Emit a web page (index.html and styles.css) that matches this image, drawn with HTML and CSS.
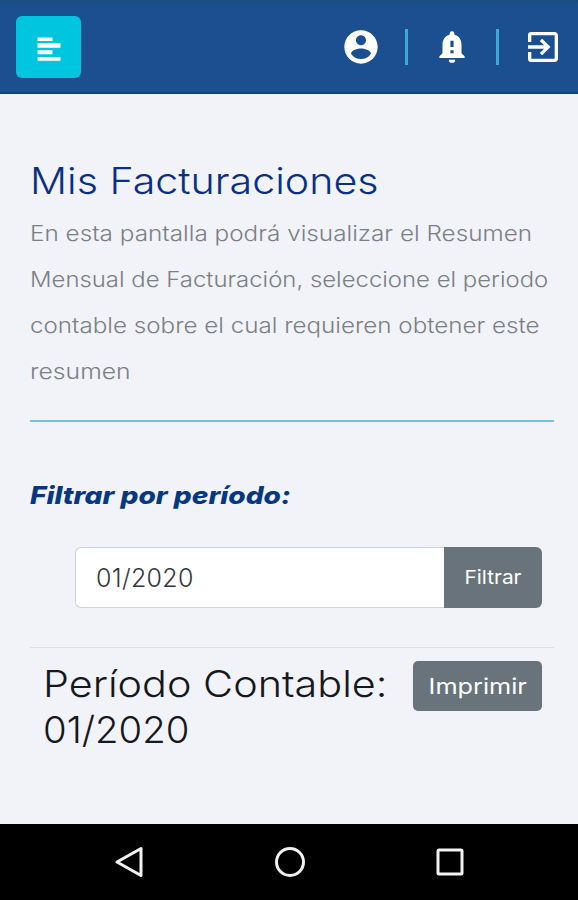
FILE: index.html
```html
<!DOCTYPE html>
<html lang="es">
<head>
<meta charset="utf-8">
<title>Mis Facturaciones</title>
<link rel="stylesheet" href="styles.css">
</head>
<body>
<header class="topbar">
  <button class="menu" aria-label="Menú">
    <svg width="24" height="24" viewBox="0 0 24 24"><path d="M0.500 0.500h15v3.500h-15zM0.500 6.200h23v4.500h-23zM0.500 13.200h15v4h-15zM0.500 20h23v3.700h-23z"/></svg>
  </button>
  <nav class="actions">
    <svg class="user" viewBox="0 0 24 24"><path d="M12 2C6.480 2 2 6.480 2 12s4.480 10 10 10 10-4.480 10-10S17.520 2 12 2zm0 3c1.660 0 3 1.340 3 3s-1.340 3-3 3-3-1.340-3-3 1.340-3 3-3zm0 14.200c-2.500 0-4.710-1.280-6-3.220.030-1.990 4-3.080 6-3.080 1.990 0 5.970 1.090 6 3.080-1.290 1.940-3.500 3.220-6 3.220z"/></svg>
    <span class="divider"></span>
    <svg class="bell" viewBox="0 0 24 24"><path fill-rule="evenodd" d="M10 20h4a2 2 0 0 1-4 0zM12 2a1.500 1.500 0 0 1 1.500 1.500v.700C16.360 4.860 18 7.420 18 10.500V16l2 2v1H4v-1l2-2v-5.500c0-3.080 1.640-5.640 4.500-6.300v-.700A1.500 1.500 0 0 1 12 2zm-1 6v4h2V8zm0 6v2h2v-2z"/></svg>
    <span class="divider"></span>
    <svg class="exit" viewBox="0 0 24 24"><path d="M10.090 15.590L11.500 17l5-5-5-5-1.410 1.410L12.670 11H3v2h9.670l-2.580 2.590zM19 3H5a2 2 0 0 0-2 2v4h2V5h14v14H5v-4H3v4a2 2 0 0 0 2 2h14c1.100 0 2-.900 2-2V5c0-1.100-.900-2-2-2z"/></svg>
  </nav>
</header>
<main>
  <h1>Mis Facturaciones</h1>
  <p class="intro">
    <span class="l1">En esta pantalla podrá visualizar el Resumen</span>
    <span class="l2">Mensual de Facturación, seleccione el periodo</span>
    <span class="l3">contable sobre el cual requieren obtener este</span>
    <span class="l4">resumen</span>
  </p>
  <hr class="accent">
  <label class="filter-label" for="periodo">Filtrar por período:</label>
  <div class="filter">
    <input id="periodo" type="text" value="01/2020">
    <button class="filter-btn"><span>Filtrar</span></button>
  </div>
  <section class="result">
    <h2><span class="t1">Período Contable:</span><span class="t2">01/2020</span></h2>
    <button class="print"><span>Imprimir</span></button>
  </section>
</main>
<footer class="navbar">
  <svg viewBox="0 0 32 32"><path d="M28 2.500v27L4 16z"/></svg>
  <svg viewBox="0 0 32 32"><circle cx="16" cy="16" r="13.500"/></svg>
  <svg viewBox="0 0 32 32"><rect x="4" y="4" width="24" height="24" rx="1"/></svg>
</footer>
</body>
</html>
```
FILE: styles.css
```css
* { box-sizing: border-box; }
body {
  margin: 0;
  height: 900px;
  display: flex;
  flex-direction: column;
  overflow: hidden;
  background: #f1f3f8;
  font-family: Inter, "Open Sans", sans-serif;
  font-weight: 300;
}
button { border: 0; padding: 0; font: inherit; color: #fff; }

.topbar {
  height: 94px;
  flex: none;
  display: flex;
  justify-content: space-between;
  align-items: center;
  padding: 0 16px;
  background: linear-gradient(#1d4c7c, #1b4f90 5px);
  border-bottom: 2px solid #0a4583;
}
.menu {
  width: 65px;
  height: 62px;
  margin-top: 2px;
  border-radius: 6px;
  background: #00c5df;
  display: grid;
  place-items: center;
}
.menu svg { fill: #fff; margin-top: 4px; }
.actions { display: flex; align-items: center; margin-top: 2px; margin-right: -1px; }
.actions svg { fill: #fff; flex: none; }
.user { width: 40px; height: 40px; }
.bell { width: 40px; height: 38px; }
.exit { width: 40px; height: 40px; }
.divider { width: 3px; height: 36px; background: #40a8d4; margin: 0 24px; }

main { flex: 1; padding: 67px 24px 0 30px; }

/* Wide letterforms: text is stretched horizontally from its left edge */
h1, .intro span, .filter-label, h2 span { width: max-content; transform-origin: left center; }
h1 {
  margin: 0;
  font-size: 37px;
  line-height: 40px;
  font-weight: 300;
  color: #0a2f86;
  transform: scaleX(1.112);
}
.intro { margin: 9px 0 0; font-size: 21.500px; line-height: 46px; color: #7b7f85; }
.intro span { display: block; }
.l1 { transform: scaleX(1.13); }
.l2 { transform: scaleX(1.112); }
.l3 { transform: scaleX(1.125); }
.l4 { transform: scaleX(1.15); }
hr { border: 0; margin: 0; }
.accent { height: 2px; background: #6cc6e2; margin-top: 26px; }
.filter-label {
  display: block;
  margin-top: 58px;
  line-height: 32px;
  font-size: 24px;
  font-weight: 800;
  font-style: italic;
  color: #063783;
  transform: scaleX(1.171);
}
.filter { display: flex; height: 61px; margin: 35px 12px 0 45px; }
.filter input {
  flex: 1;
  min-width: 0;
  border: 1px solid #ced2da;
  border-right: 0;
  border-radius: 6px 0 0 6px;
  padding: 0 20px;
  background: #fff;
  font: inherit;
  font-size: 25px;
  letter-spacing: 0.3px;
  color: #33383d;
}
.filter-btn {
  width: 98px;
  border-radius: 0 6px 6px 0;
  background: #69737b;
  font-size: 19px;
  font-weight: 400;
}
.filter-btn span { display: inline-block; transform: scaleX(1.1); }
.result {
  display: flex;
  justify-content: space-between;
  align-items: flex-start;
  margin-top: 39px;
  padding: 13px 12px 0 13px;
  border-top: 1px solid #dce0e5;
}
h2 { margin: 0; font-size: 37px; line-height: 46px; font-weight: 300; color: #15181c; }
h2 span { display: block; }
.t1 { transform: scaleX(1.117); }
.t2 { transform: scaleX(1.035); }
.print {
  width: 129px;
  height: 50px;
  border-radius: 5px;
  background: #69737b;
  font-size: 22px;
  font-weight: 400;
}
.print span { display: inline-block; transform: scaleX(1.15); }

.navbar {
  height: 76px;
  flex: none;
  display: flex;
  justify-content: space-between;
  padding: 22px 112px 0 113px;
  background: #000;
}
.navbar svg { width: 32px; height: 32px; fill: none; stroke: #f2f2f2; stroke-width: 3; stroke-linejoin: round; }
```
